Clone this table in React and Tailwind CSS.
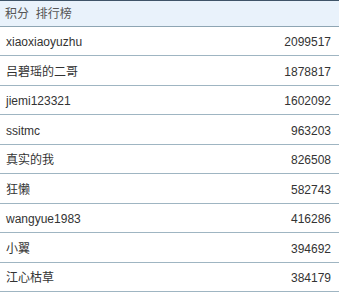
import React from "react";

const rows = [
  ["xiaoxiaoyuzhu", "2099517", "h-[29px]"],
  ["吕碧瑶的二哥", "1878817", "h-[30px]"],
  ["jiemi123321", "1602092", "h-[29px]"],
  ["ssitmc", "963203", "h-[30px]"],
  ["真实的我", "826508", "h-[29px]"],
  ["狂懒", "582743", "h-[30px]"],
  ["wangyue1983", "416286", "h-[29px]"],
  ["小翼", "394692", "h-[30px]"],
  ["江心枯草", "384179", "h-[29px]"],
];

export default function App() {
  return (
    <div
      className="w-[339px] h-[296px] overflow-hidden bg-white text-[12px] text-[#333]"
      style={{ fontFamily: '"Liberation Sans", Arial, "Noto Sans CJK SC", sans-serif' }}
    >
      <div className="h-[27px] border-t border-b border-t-[#3f5468] border-b-[#8ea5b3] bg-[#e9f2fb] flex items-center pl-[5px] text-[#555]">
        积分&nbsp;&nbsp;排行榜
      </div>
      {rows.map(([name, score, h]) => (
        <div
          key={name}
          className={`${h} flex items-center justify-between border-b border-[#9fb5c2] pl-[6px] pr-[8px] pt-[2px]`}
        >
          <span>{name}</span>
          <span>{score}</span>
        </div>
      ))}
    </div>
  );
}
